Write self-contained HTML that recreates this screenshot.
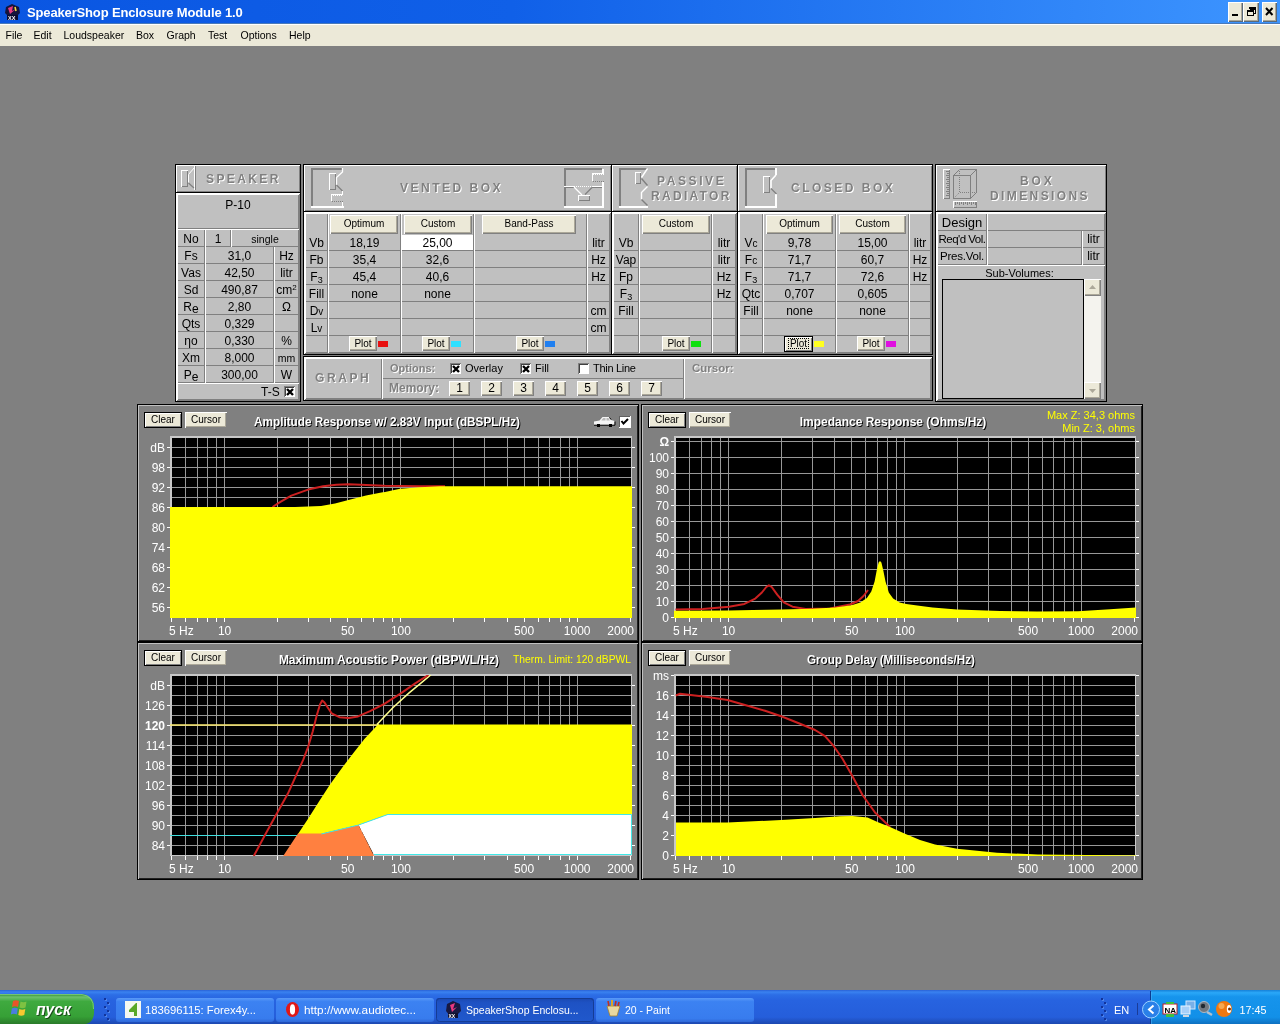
<!DOCTYPE html><html><head><meta charset="utf-8"><title>SpeakerShop Enclosure Module 1.0</title><style>
*{box-sizing:border-box;margin:0;padding:0}
html,body{width:1280px;height:1024px;overflow:hidden;background:#808080;font-family:"Liberation Sans",sans-serif;font-size:13px;color:#000}
.a{position:absolute}
#title{left:0;top:0;width:1280px;height:24px;background:linear-gradient(90deg,#0a56e2 0%,#1060e8 40%,#3d95ff 100%);border-bottom:1px solid #4a7ab8}
#title .t{left:27px;top:5px;color:#fff;font-weight:bold;font-size:13px;letter-spacing:-0.15px;white-space:nowrap}
#menu{left:0;top:24px;width:1280px;height:22px;background:#ece9d8;font-size:10.500px;border-top:1px solid #fff}
#menu span{position:absolute;top:4px;white-space:nowrap}
.pn{position:absolute;background:#c0c0c0;border:1px solid #000;box-shadow:inset 1px 1px 0 #fff,inset -1px -1px 0 #808080}
.c{position:absolute;background:#c0c0c0;box-shadow:inset 1px 1px 0 #fff,inset -1px -1px 0 #808080;text-align:center;white-space:nowrap;font-size:13px;line-height:17px;overflow:hidden}
.btn{position:absolute;background:#ece9d8;box-shadow:inset 1px 1px 0 #fff,inset -1px -1px 0 #808080,inset -2px -2px 0 #aca899;text-align:center;white-space:nowrap;font-size:11px}
.cb{position:absolute;width:11px;height:11px;background:#fff;box-shadow:inset 1px 1px 0 #808080,inset -1px -1px 0 #fff,inset 2px 2px 0 #404040}
.sw{position:absolute;width:10px;height:6px}
.lb{position:absolute;white-space:nowrap;font-size:12px;line-height:14px}
.hd{position:absolute;color:#808080;font-weight:bold;font-size:12px;letter-spacing:2.5px;text-shadow:1px 1px 0 #fff;white-space:nowrap;text-align:left}
.c2{position:absolute;background:#c0c0c0;box-shadow:inset 1px 0 0 #fff,inset -1px 0 0 #808080,inset 0 -1px 0 #808080;text-align:center;white-space:nowrap;font-size:12px;overflow:hidden}
.gp{position:absolute;background:#808080;border:1px solid #000;box-shadow:inset 1px 1px 0 #c0c0c0,inset -1px -1px 0 #202020}
.gt{position:absolute;color:#fff;font-weight:bold;font-size:12px;white-space:nowrap;text-shadow:1px 1px 0 #000;text-align:center}
</style></head><body><div id="root" style="position:absolute;left:0;top:0;width:1280px;height:1024px;will-change:transform">
<div id="title" class="a"><div class="a t">SpeakerShop Enclosure Module 1.0</div></div>
<div id="menu" class="a">
<span style="left:5.5px">File</span>
<span style="left:33.5px">Edit</span>
<span style="left:63.5px">Loudspeaker</span>
<span style="left:136px">Box</span>
<span style="left:166.5px">Graph</span>
<span style="left:208px">Test</span>
<span style="left:240.5px">Options</span>
<span style="left:289px">Help</span>
</div>
<div class="pn" style="left:175px;top:164px;width:126px;height:29px;"></div>
<div class="pn" style="left:175px;top:192px;width:126px;height:210px;"></div>
<div class="pn" style="left:303px;top:164px;width:309px;height:48px;"></div>
<div class="pn" style="left:303px;top:211px;width:309px;height:144px;"></div>
<div class="pn" style="left:611px;top:164px;width:127px;height:48px;"></div>
<div class="pn" style="left:611px;top:211px;width:127px;height:144px;"></div>
<div class="pn" style="left:737px;top:164px;width:196px;height:48px;"></div>
<div class="pn" style="left:737px;top:211px;width:196px;height:144px;"></div>
<div class="pn" style="left:303px;top:356px;width:630px;height:45px;"></div>
<div class="pn" style="left:935px;top:164px;width:172px;height:48px;"></div>
<div class="pn" style="left:935px;top:211px;width:172px;height:191px;"></div>
<div class="hd" style="left:206px;top:172px;letter-spacing:2.4px;font-size:12px">SPEAKER</div>
<div class="hd" style="left:400px;top:181px;letter-spacing:2.5px;font-size:12px">VENTED BOX</div>
<div class="hd" style="left:657px;top:174px;letter-spacing:2.6px;font-size:12px">PASSIVE</div>
<div class="hd" style="left:651px;top:189px;letter-spacing:2.3px;font-size:12px">RADIATOR</div>
<div class="hd" style="left:791px;top:181px;letter-spacing:2.5px;font-size:12px">CLOSED BOX</div>
<div class="hd" style="left:1020px;top:174px;letter-spacing:2.9px;font-size:12px">BOX</div>
<div class="hd" style="left:990px;top:189px;letter-spacing:2.4px;font-size:12px">DIMENSIONS</div>
<svg class="a" style="left:175px;top:164px" width="30" height="28" shape-rendering="crispEdges"><path d="M6.5 23 V6.5 H13" stroke="#fff" stroke-width="1" fill="none" /><path d="M12.5 7 V22.5 H7" stroke="#808080" stroke-width="1" fill="none" /><path d="M13.5 18.5 V10.5 L19.5 3.5" stroke="#fff" stroke-width="1" fill="none" shape-rendering="geometricPrecision"/><path d="M19.5 2 L19.5 26" stroke="#fff" stroke-width="1" fill="none" /><path d="M20.5 2 L20.5 26" stroke="#808080" stroke-width="1" fill="none" /><path d="M13.5 19 L19 24" stroke="#808080" stroke-width="1.2" fill="none" shape-rendering="geometricPrecision"/></svg>
<svg class="a" style="left:304px;top:164px" width="44" height="46" shape-rendering="crispEdges"><path d="M8 42 V5 H38" stroke="#808080" stroke-width="2" fill="none" /><path d="M7 43 H40" stroke="#fff" stroke-width="2" fill="none" /><path d="M25.5 26 V9.5 H32" stroke="#fff" stroke-width="1" fill="none" /><path d="M31.5 10 V25.5 H26" stroke="#808080" stroke-width="1" fill="none" /><path d="M38.5 4 V8 L32.5 13.5 V21" stroke="#fff" stroke-width="1.3" fill="none" shape-rendering="geometricPrecision"/><path d="M32.5 21 L38.5 27" stroke="#808080" stroke-width="1.3" fill="none" shape-rendering="geometricPrecision"/><path d="M38.5 27 L38.5 31" stroke="#fff" stroke-width="1" fill="none" /><path d="M27.5 37 V30.5 H39" stroke="#fff" stroke-width="1" fill="none" /><path d="M27 31.5 L39 31.5" stroke="#fff" stroke-width="1" fill="none" stroke-dasharray="1 1"/><path d="M28 37.5 L39 37.5" stroke="#808080" stroke-width="1" fill="none" stroke-dasharray="1 1"/><path d="M38.5 38 L38.5 44" stroke="#fff" stroke-width="1" fill="none" /></svg>
<svg class="a" style="left:556px;top:164px" width="50" height="46" shape-rendering="crispEdges"><path d="M9 42 V5 H46" stroke="#808080" stroke-width="2" fill="none" /><path d="M8 43 H48" stroke="#fff" stroke-width="2" fill="none" /><path d="M47 5 V9" stroke="#fff" stroke-width="2" fill="none" /><path d="M47 18 V44" stroke="#fff" stroke-width="2" fill="none" /><path d="M8 22.5 L18 22.5" stroke="#fff" stroke-width="1" fill="none" /><path d="M10 23.5 L18 23.5" stroke="#808080" stroke-width="1" fill="none" /><path d="M18 22.5 L36 22.5" stroke="#fff" stroke-width="1" fill="none" stroke-dasharray="1 1"/><path d="M36 22.5 L46 22.5" stroke="#fff" stroke-width="1" fill="none" /><path d="M36 23.5 L46 23.5" stroke="#808080" stroke-width="1" fill="none" /><path d="M18 23 L26 31" stroke="#fff" stroke-width="1.3" fill="none" shape-rendering="geometricPrecision"/><path d="M36 23.5 L29 30.5" stroke="#808080" stroke-width="1.3" fill="none" shape-rendering="geometricPrecision"/><path d="M22.5 37 V31.5 H34" stroke="#fff" stroke-width="1" fill="none" /><path d="M33.5 32 V36.5 H23" stroke="#808080" stroke-width="1" fill="none" /><path d="M36.5 17 V9.5 H48" stroke="#fff" stroke-width="1" fill="none" /><path d="M37 10.5 L48 10.5" stroke="#fff" stroke-width="1" fill="none" stroke-dasharray="1 1"/><path d="M37 17.5 L48 17.5" stroke="#808080" stroke-width="1" fill="none" stroke-dasharray="1 1"/></svg>
<svg class="a" style="left:610px;top:164px" width="42" height="46" shape-rendering="crispEdges"><path d="M10 42 V5 H37" stroke="#808080" stroke-width="2" fill="none" /><path d="M9 43 H38" stroke="#fff" stroke-width="2" fill="none" /><path d="M25.5 20 V8.5 H31" stroke="#fff" stroke-width="1" fill="none" /><path d="M30.5 9 V19.5 H26" stroke="#808080" stroke-width="1" fill="none" /><path d="M37.5 4.5 L31.5 13.5" stroke="#fff" stroke-width="1.4" fill="none" shape-rendering="geometricPrecision"/><path d="M31.5 14.5 L37.5 21.5" stroke="#808080" stroke-width="1.4" fill="none" shape-rendering="geometricPrecision"/><path d="M37.5 22.5 L31.5 28.5 V35.5" stroke="#fff" stroke-width="1.4" fill="none" shape-rendering="geometricPrecision"/><path d="M31.5 35.5 L37.5 41.5" stroke="#808080" stroke-width="1.4" fill="none" shape-rendering="geometricPrecision"/></svg>
<svg class="a" style="left:736px;top:164px" width="44" height="46" shape-rendering="crispEdges"><path d="M10 42 V5 H40" stroke="#808080" stroke-width="2" fill="none" /><path d="M9 43 H41" stroke="#fff" stroke-width="2" fill="none" /><path d="M40 4 V11" stroke="#fff" stroke-width="2" fill="none" /><path d="M40 30 V44" stroke="#fff" stroke-width="2" fill="none" /><path d="M27.5 29 V12.5 H34" stroke="#fff" stroke-width="1" fill="none" /><path d="M33.5 13 V28.5 H28" stroke="#808080" stroke-width="1" fill="none" /><path d="M40 11 L35 16.5 V24.5" stroke="#fff" stroke-width="1.6" fill="none" shape-rendering="geometricPrecision"/><path d="M35 24.5 L40.5 30" stroke="#808080" stroke-width="1.3" fill="none" shape-rendering="geometricPrecision"/></svg>
<svg class="a" style="left:934px;top:164px" width="50" height="46" shape-rendering="crispEdges"><path d="M9.5 35 V5.5 H16" stroke="#fff" stroke-width="1" fill="none" /><path d="M15.5 6 V34.5 H10" stroke="#808080" stroke-width="1" fill="none" /><path d="M12 7.5 L15 7.5" stroke="#808080" stroke-width="1" fill="none" /><path d="M13 9.5 L15 9.5" stroke="#808080" stroke-width="1" fill="none" /><path d="M12 11.5 L15 11.5" stroke="#808080" stroke-width="1" fill="none" /><path d="M13 13.5 L15 13.5" stroke="#808080" stroke-width="1" fill="none" /><path d="M12 15.5 L15 15.5" stroke="#808080" stroke-width="1" fill="none" /><path d="M13 17.5 L15 17.5" stroke="#808080" stroke-width="1" fill="none" /><path d="M12 19.5 L15 19.5" stroke="#808080" stroke-width="1" fill="none" /><path d="M13 21.5 L15 21.5" stroke="#808080" stroke-width="1" fill="none" /><path d="M12 23.5 L15 23.5" stroke="#808080" stroke-width="1" fill="none" /><path d="M13 25.5 L15 25.5" stroke="#808080" stroke-width="1" fill="none" /><path d="M12 27.5 L15 27.5" stroke="#808080" stroke-width="1" fill="none" /><path d="M13 29.5 L15 29.5" stroke="#808080" stroke-width="1" fill="none" /><path d="M12 31.5 L15 31.5" stroke="#808080" stroke-width="1" fill="none" /><path d="M19.5 44 V37.5 H43" stroke="#fff" stroke-width="1" fill="none" /><path d="M42.5 38 V43.5 H20" stroke="#808080" stroke-width="1" fill="none" /><path d="M21.5 38 L21.5 41" stroke="#808080" stroke-width="1" fill="none" /><path d="M23.5 38 L23.5 40" stroke="#808080" stroke-width="1" fill="none" /><path d="M25.5 38 L25.5 41" stroke="#808080" stroke-width="1" fill="none" /><path d="M27.5 38 L27.5 40" stroke="#808080" stroke-width="1" fill="none" /><path d="M29.5 38 L29.5 41" stroke="#808080" stroke-width="1" fill="none" /><path d="M31.5 38 L31.5 40" stroke="#808080" stroke-width="1" fill="none" /><path d="M33.5 38 L33.5 41" stroke="#808080" stroke-width="1" fill="none" /><path d="M35.5 38 L35.5 40" stroke="#808080" stroke-width="1" fill="none" /><path d="M37.5 38 L37.5 41" stroke="#808080" stroke-width="1" fill="none" /><path d="M39.5 38 L39.5 40" stroke="#808080" stroke-width="1" fill="none" /><path d="M41.5 38 L41.5 41" stroke="#808080" stroke-width="1" fill="none" /><path d="M19.5 11.5 H36.5 V34.5 H19.5 Z" stroke="#808080" stroke-width="1" fill="none" /><path d="M25.5 5.5 H42.5 V28.5" stroke="#808080" stroke-width="1" fill="none" /><path d="M19.5 11.5 L25.5 5.5 M36.5 11.5 L42.5 5.5 M36.5 34.5 L42.5 28.5" stroke="#808080" stroke-width="1" fill="none" shape-rendering="geometricPrecision"/><path d="M25.5 7 L25.5 28" stroke="#808080" stroke-width="1" fill="none" stroke-dasharray="1 1"/><path d="M26 28.5 L42 28.5" stroke="#808080" stroke-width="1" fill="none" stroke-dasharray="1 1"/><path d="M25 29 L20 34" stroke="#808080" stroke-width="1" fill="none" shape-rendering="geometricPrecision" stroke-dasharray="1 1.4"/></svg>
<div class="c" style="left:177px;top:194px;width:122px;height:35px;font-size:12px;line-height:23px;">P-10</div>
<div class="a" style="left:177px;top:229px;width:122px;height:1px;background:#fff"></div>
<div class="c2" style="left:177px;top:230px;width:28px;height:17px;font-size:12px;line-height:19px;">No</div>
<div class="c2" style="left:205px;top:230px;width:26px;height:17px;font-size:12px;line-height:19px;">1</div>
<div class="c2" style="left:231px;top:230px;width:68px;height:17px;font-size:10.5px;line-height:19px;">single</div>
<div class="c2" style="left:177px;top:247px;width:28px;height:17px;font-size:12px;line-height:19px;">Fs</div>
<div class="c2" style="left:205px;top:247px;width:69px;height:17px;font-size:12px;line-height:19px;">31,0</div>
<div class="c2" style="left:274px;top:247px;width:25px;height:17px;font-size:12px;line-height:19px;">Hz</div>
<div class="c2" style="left:177px;top:264px;width:28px;height:17px;font-size:12px;line-height:19px;">Vas</div>
<div class="c2" style="left:205px;top:264px;width:69px;height:17px;font-size:12px;line-height:19px;">42,50</div>
<div class="c2" style="left:274px;top:264px;width:25px;height:17px;font-size:12px;line-height:19px;">litr</div>
<div class="c2" style="left:177px;top:281px;width:28px;height:17px;font-size:12px;line-height:19px;">Sd</div>
<div class="c2" style="left:205px;top:281px;width:69px;height:17px;font-size:12px;line-height:19px;">490,87</div>
<div class="c2" style="left:274px;top:281px;width:25px;height:17px;font-size:12px;line-height:19px;">cm<sup style="font-size:8px;line-height:0;vertical-align:4px">2</sup></div>
<div class="c2" style="left:177px;top:298px;width:28px;height:17px;font-size:12px;line-height:19px;">R<span style="position:relative;top:2px">e</span></div>
<div class="c2" style="left:205px;top:298px;width:69px;height:17px;font-size:12px;line-height:19px;">2,80</div>
<div class="c2" style="left:274px;top:298px;width:25px;height:17px;font-size:12px;line-height:19px;">&Omega;</div>
<div class="c2" style="left:177px;top:315px;width:28px;height:17px;font-size:12px;line-height:19px;">Qts</div>
<div class="c2" style="left:205px;top:315px;width:69px;height:17px;font-size:12px;line-height:19px;">0,329</div>
<div class="c2" style="left:274px;top:315px;width:25px;height:17px;font-size:12px;line-height:19px;"></div>
<div class="c2" style="left:177px;top:332px;width:28px;height:17px;font-size:12px;line-height:19px;">&eta;o</div>
<div class="c2" style="left:205px;top:332px;width:69px;height:17px;font-size:12px;line-height:19px;">0,330</div>
<div class="c2" style="left:274px;top:332px;width:25px;height:17px;font-size:12px;line-height:19px;">%</div>
<div class="c2" style="left:177px;top:349px;width:28px;height:17px;font-size:12px;line-height:19px;">Xm</div>
<div class="c2" style="left:205px;top:349px;width:69px;height:17px;font-size:12px;line-height:19px;">8,000</div>
<div class="c2" style="left:274px;top:349px;width:25px;height:17px;font-size:10.5px;line-height:19px;">mm</div>
<div class="c2" style="left:177px;top:366px;width:28px;height:17px;font-size:12px;line-height:19px;">P<span style="position:relative;top:2px">e</span></div>
<div class="c2" style="left:205px;top:366px;width:69px;height:17px;font-size:12px;line-height:19px;">300,00</div>
<div class="c2" style="left:274px;top:366px;width:25px;height:17px;font-size:12px;line-height:19px;">W</div>
<div class="c" style="left:177px;top:383px;width:122px;height:17px;font-size:12px;line-height:17px;"></div>
<div class="lb" style="left:261px;top:385px;font-size:12px;">T-S</div>
<div class="cb" style="left:284px;top:386px"><svg width="11" height="11" style="position:absolute;left:0;top:0"><path d="M3 3 L9 9 M9 3 L3 9" stroke="#000" stroke-width="2.4" fill="none"/></svg></div>
<div class="c" style="left:305px;top:213px;width:23px;height:140px;font-size:12px;line-height:140px;"></div>
<div class="a" style="left:306px;top:250px;width:21px;height:1px;background:#808080"></div>
<div class="a" style="left:306px;top:267px;width:21px;height:1px;background:#808080"></div>
<div class="a" style="left:306px;top:284px;width:21px;height:1px;background:#808080"></div>
<div class="a" style="left:306px;top:301px;width:21px;height:1px;background:#808080"></div>
<div class="a" style="left:306px;top:318px;width:21px;height:1px;background:#808080"></div>
<div class="a" style="left:306px;top:335px;width:21px;height:1px;background:#808080"></div>
<div class="lb" style="left:305px;width:23px;text-align:center;top:236px;font-size:12px">Vb</div>
<div class="lb" style="left:305px;width:23px;text-align:center;top:253px;font-size:12px">Fb</div>
<div class="lb" style="left:305px;width:23px;text-align:center;top:270px;font-size:12px">F<span style="font-size:9px;position:relative;top:2px">3</span></div>
<div class="lb" style="left:305px;width:23px;text-align:center;top:287px;font-size:12px">Fill</div>
<div class="lb" style="left:305px;width:23px;text-align:center;top:304px;font-size:12px">D<span style="font-size:10px">v</span></div>
<div class="lb" style="left:305px;width:23px;text-align:center;top:321px;font-size:12px">L<span style="font-size:10px">v</span></div>
<div class="c" style="left:328px;top:213px;width:73px;height:140px;font-size:12px;line-height:140px;"></div>
<div class="a" style="left:329px;top:250px;width:71px;height:1px;background:#808080"></div>
<div class="a" style="left:329px;top:267px;width:71px;height:1px;background:#808080"></div>
<div class="a" style="left:329px;top:284px;width:71px;height:1px;background:#808080"></div>
<div class="a" style="left:329px;top:301px;width:71px;height:1px;background:#808080"></div>
<div class="a" style="left:329px;top:318px;width:71px;height:1px;background:#808080"></div>
<div class="a" style="left:329px;top:335px;width:71px;height:1px;background:#808080"></div>
<div class="lb" style="left:328px;width:73px;text-align:center;top:236px;font-size:12px">18,19</div>
<div class="lb" style="left:328px;width:73px;text-align:center;top:253px;font-size:12px">35,4</div>
<div class="lb" style="left:328px;width:73px;text-align:center;top:270px;font-size:12px">45,4</div>
<div class="lb" style="left:328px;width:73px;text-align:center;top:287px;font-size:12px">none</div>
<div class="c" style="left:401px;top:213px;width:73px;height:140px;font-size:12px;line-height:140px;"></div>
<div class="a" style="left:402px;top:250px;width:71px;height:1px;background:#808080"></div>
<div class="a" style="left:402px;top:267px;width:71px;height:1px;background:#808080"></div>
<div class="a" style="left:402px;top:284px;width:71px;height:1px;background:#808080"></div>
<div class="a" style="left:402px;top:301px;width:71px;height:1px;background:#808080"></div>
<div class="a" style="left:402px;top:318px;width:71px;height:1px;background:#808080"></div>
<div class="a" style="left:402px;top:335px;width:71px;height:1px;background:#808080"></div>
<div class="lb" style="left:401px;width:73px;text-align:center;top:253px;font-size:12px">32,6</div>
<div class="lb" style="left:401px;width:73px;text-align:center;top:270px;font-size:12px">40,6</div>
<div class="lb" style="left:401px;width:73px;text-align:center;top:287px;font-size:12px">none</div>
<div class="a" style="left:402px;top:235px;width:71px;height:15px;background:#fff;text-align:center;font-size:12px;line-height:16px">25,00</div>
<div class="c" style="left:474px;top:213px;width:113px;height:140px;font-size:12px;line-height:140px;"></div>
<div class="a" style="left:475px;top:250px;width:111px;height:1px;background:#808080"></div>
<div class="a" style="left:475px;top:267px;width:111px;height:1px;background:#808080"></div>
<div class="a" style="left:475px;top:284px;width:111px;height:1px;background:#808080"></div>
<div class="a" style="left:475px;top:301px;width:111px;height:1px;background:#808080"></div>
<div class="a" style="left:475px;top:318px;width:111px;height:1px;background:#808080"></div>
<div class="a" style="left:475px;top:335px;width:111px;height:1px;background:#808080"></div>
<div class="c" style="left:587px;top:213px;width:23px;height:140px;font-size:12px;line-height:140px;"></div>
<div class="a" style="left:588px;top:250px;width:21px;height:1px;background:#808080"></div>
<div class="a" style="left:588px;top:267px;width:21px;height:1px;background:#808080"></div>
<div class="a" style="left:588px;top:284px;width:21px;height:1px;background:#808080"></div>
<div class="a" style="left:588px;top:301px;width:21px;height:1px;background:#808080"></div>
<div class="a" style="left:588px;top:318px;width:21px;height:1px;background:#808080"></div>
<div class="a" style="left:588px;top:335px;width:21px;height:1px;background:#808080"></div>
<div class="lb" style="left:587px;width:23px;text-align:center;top:236px;font-size:12px">litr</div>
<div class="lb" style="left:587px;width:23px;text-align:center;top:253px;font-size:12px">Hz</div>
<div class="lb" style="left:587px;width:23px;text-align:center;top:270px;font-size:12px">Hz</div>
<div class="lb" style="left:587px;width:23px;text-align:center;top:304px;font-size:12px">cm</div>
<div class="lb" style="left:587px;width:23px;text-align:center;top:321px;font-size:12px">cm</div>
<div class="btn" style="left:330px;top:215px;width:68px;height:19px;line-height:18px;font-size:10px;">Optimum</div>
<div class="btn" style="left:404px;top:215px;width:68px;height:19px;line-height:18px;font-size:10px;">Custom</div>
<div class="btn" style="left:482px;top:215px;width:94px;height:19px;line-height:18px;font-size:10px;">Band-Pass</div>
<div class="btn" style="left:349px;top:336px;width:28px;height:15px;line-height:14px;font-size:10px;line-height:15px;">Plot</div>
<div class="sw" style="left:378px;top:341px;background:#e81010"></div>
<div class="btn" style="left:422px;top:336px;width:28px;height:15px;line-height:14px;font-size:10px;line-height:15px;">Plot</div>
<div class="sw" style="left:451px;top:341px;background:#30e0ff"></div>
<div class="btn" style="left:516px;top:336px;width:28px;height:15px;line-height:14px;font-size:10px;line-height:15px;">Plot</div>
<div class="sw" style="left:545px;top:341px;background:#2080f0"></div>
<div class="c" style="left:613px;top:213px;width:26px;height:140px;font-size:12px;line-height:140px;"></div>
<div class="a" style="left:614px;top:250px;width:24px;height:1px;background:#808080"></div>
<div class="a" style="left:614px;top:267px;width:24px;height:1px;background:#808080"></div>
<div class="a" style="left:614px;top:284px;width:24px;height:1px;background:#808080"></div>
<div class="a" style="left:614px;top:301px;width:24px;height:1px;background:#808080"></div>
<div class="a" style="left:614px;top:318px;width:24px;height:1px;background:#808080"></div>
<div class="a" style="left:614px;top:335px;width:24px;height:1px;background:#808080"></div>
<div class="lb" style="left:613px;width:26px;text-align:center;top:236px;font-size:12px">Vb</div>
<div class="lb" style="left:613px;width:26px;text-align:center;top:253px;font-size:12px">Vap</div>
<div class="lb" style="left:613px;width:26px;text-align:center;top:270px;font-size:12px">Fp</div>
<div class="lb" style="left:613px;width:26px;text-align:center;top:287px;font-size:12px">F<span style="font-size:9px;position:relative;top:2px">3</span></div>
<div class="lb" style="left:613px;width:26px;text-align:center;top:304px;font-size:12px">Fill</div>
<div class="c" style="left:639px;top:213px;width:73px;height:140px;font-size:12px;line-height:140px;"></div>
<div class="a" style="left:640px;top:250px;width:71px;height:1px;background:#808080"></div>
<div class="a" style="left:640px;top:267px;width:71px;height:1px;background:#808080"></div>
<div class="a" style="left:640px;top:284px;width:71px;height:1px;background:#808080"></div>
<div class="a" style="left:640px;top:301px;width:71px;height:1px;background:#808080"></div>
<div class="a" style="left:640px;top:318px;width:71px;height:1px;background:#808080"></div>
<div class="a" style="left:640px;top:335px;width:71px;height:1px;background:#808080"></div>
<div class="c" style="left:712px;top:213px;width:24px;height:140px;font-size:12px;line-height:140px;"></div>
<div class="a" style="left:713px;top:250px;width:22px;height:1px;background:#808080"></div>
<div class="a" style="left:713px;top:267px;width:22px;height:1px;background:#808080"></div>
<div class="a" style="left:713px;top:284px;width:22px;height:1px;background:#808080"></div>
<div class="a" style="left:713px;top:301px;width:22px;height:1px;background:#808080"></div>
<div class="a" style="left:713px;top:318px;width:22px;height:1px;background:#808080"></div>
<div class="a" style="left:713px;top:335px;width:22px;height:1px;background:#808080"></div>
<div class="lb" style="left:712px;width:24px;text-align:center;top:236px;font-size:12px">litr</div>
<div class="lb" style="left:712px;width:24px;text-align:center;top:253px;font-size:12px">litr</div>
<div class="lb" style="left:712px;width:24px;text-align:center;top:270px;font-size:12px">Hz</div>
<div class="lb" style="left:712px;width:24px;text-align:center;top:287px;font-size:12px">Hz</div>
<div class="btn" style="left:642px;top:215px;width:68px;height:19px;line-height:18px;font-size:10px;">Custom</div>
<div class="btn" style="left:662px;top:336px;width:28px;height:15px;line-height:14px;font-size:10px;line-height:15px;">Plot</div>
<div class="sw" style="left:691px;top:341px;background:#10e010"></div>
<div class="c" style="left:739px;top:213px;width:24px;height:140px;font-size:12px;line-height:140px;"></div>
<div class="a" style="left:740px;top:250px;width:22px;height:1px;background:#808080"></div>
<div class="a" style="left:740px;top:267px;width:22px;height:1px;background:#808080"></div>
<div class="a" style="left:740px;top:284px;width:22px;height:1px;background:#808080"></div>
<div class="a" style="left:740px;top:301px;width:22px;height:1px;background:#808080"></div>
<div class="a" style="left:740px;top:318px;width:22px;height:1px;background:#808080"></div>
<div class="a" style="left:740px;top:335px;width:22px;height:1px;background:#808080"></div>
<div class="lb" style="left:739px;width:24px;text-align:center;top:236px;font-size:12px">V<span style="font-size:10px">c</span></div>
<div class="lb" style="left:739px;width:24px;text-align:center;top:253px;font-size:12px">F<span style="font-size:10px">c</span></div>
<div class="lb" style="left:739px;width:24px;text-align:center;top:270px;font-size:12px">F<span style="font-size:9px;position:relative;top:2px">3</span></div>
<div class="lb" style="left:739px;width:24px;text-align:center;top:287px;font-size:12px">Qtc</div>
<div class="lb" style="left:739px;width:24px;text-align:center;top:304px;font-size:12px">Fill</div>
<div class="c" style="left:763px;top:213px;width:73px;height:140px;font-size:12px;line-height:140px;"></div>
<div class="a" style="left:764px;top:250px;width:71px;height:1px;background:#808080"></div>
<div class="a" style="left:764px;top:267px;width:71px;height:1px;background:#808080"></div>
<div class="a" style="left:764px;top:284px;width:71px;height:1px;background:#808080"></div>
<div class="a" style="left:764px;top:301px;width:71px;height:1px;background:#808080"></div>
<div class="a" style="left:764px;top:318px;width:71px;height:1px;background:#808080"></div>
<div class="a" style="left:764px;top:335px;width:71px;height:1px;background:#808080"></div>
<div class="lb" style="left:763px;width:73px;text-align:center;top:236px;font-size:12px">9,78</div>
<div class="lb" style="left:763px;width:73px;text-align:center;top:253px;font-size:12px">71,7</div>
<div class="lb" style="left:763px;width:73px;text-align:center;top:270px;font-size:12px">71,7</div>
<div class="lb" style="left:763px;width:73px;text-align:center;top:287px;font-size:12px">0,707</div>
<div class="lb" style="left:763px;width:73px;text-align:center;top:304px;font-size:12px">none</div>
<div class="c" style="left:836px;top:213px;width:73px;height:140px;font-size:12px;line-height:140px;"></div>
<div class="a" style="left:837px;top:250px;width:71px;height:1px;background:#808080"></div>
<div class="a" style="left:837px;top:267px;width:71px;height:1px;background:#808080"></div>
<div class="a" style="left:837px;top:284px;width:71px;height:1px;background:#808080"></div>
<div class="a" style="left:837px;top:301px;width:71px;height:1px;background:#808080"></div>
<div class="a" style="left:837px;top:318px;width:71px;height:1px;background:#808080"></div>
<div class="a" style="left:837px;top:335px;width:71px;height:1px;background:#808080"></div>
<div class="lb" style="left:836px;width:73px;text-align:center;top:236px;font-size:12px">15,00</div>
<div class="lb" style="left:836px;width:73px;text-align:center;top:253px;font-size:12px">60,7</div>
<div class="lb" style="left:836px;width:73px;text-align:center;top:270px;font-size:12px">72,6</div>
<div class="lb" style="left:836px;width:73px;text-align:center;top:287px;font-size:12px">0,605</div>
<div class="lb" style="left:836px;width:73px;text-align:center;top:304px;font-size:12px">none</div>
<div class="c" style="left:909px;top:213px;width:22px;height:140px;font-size:12px;line-height:140px;"></div>
<div class="a" style="left:910px;top:250px;width:20px;height:1px;background:#808080"></div>
<div class="a" style="left:910px;top:267px;width:20px;height:1px;background:#808080"></div>
<div class="a" style="left:910px;top:284px;width:20px;height:1px;background:#808080"></div>
<div class="a" style="left:910px;top:301px;width:20px;height:1px;background:#808080"></div>
<div class="a" style="left:910px;top:318px;width:20px;height:1px;background:#808080"></div>
<div class="a" style="left:910px;top:335px;width:20px;height:1px;background:#808080"></div>
<div class="lb" style="left:909px;width:22px;text-align:center;top:236px;font-size:12px">litr</div>
<div class="lb" style="left:909px;width:22px;text-align:center;top:253px;font-size:12px">Hz</div>
<div class="lb" style="left:909px;width:22px;text-align:center;top:270px;font-size:12px">Hz</div>
<div class="btn" style="left:766px;top:215px;width:67px;height:19px;line-height:18px;font-size:10px;">Optimum</div>
<div class="btn" style="left:839px;top:215px;width:67px;height:19px;line-height:18px;font-size:10px;">Custom</div>
<div class="btn" style="left:784px;top:336px;width:29px;height:16px;line-height:15px;font-size:10px;line-height:16px;box-shadow:inset 0 0 0 1px #000,inset 2px 2px 0 #fff,inset -2px -2px 0 #808080;"><span style="outline:1px dotted #000;outline-offset:-1px;padding:0 2px">Plot</span></div>
<div class="sw" style="left:814px;top:341px;background:#ffff20"></div>
<div class="btn" style="left:857px;top:336px;width:28px;height:15px;line-height:14px;font-size:10px;line-height:15px;">Plot</div>
<div class="sw" style="left:886px;top:341px;background:#e010e0"></div>
<div class="c" style="left:305px;top:358px;width:77px;height:41px;font-size:12px;line-height:41px;"></div>
<div class="hd" style="left:315px;top:371px;letter-spacing:2.6px;font-size:12px">GRAPH</div>
<div class="c" style="left:382px;top:358px;width:302px;height:41px;font-size:12px;line-height:41px;"></div>
<div class="a" style="left:383px;top:378px;width:300px;height:1px;background:#808080"></div>
<div class="c" style="left:684px;top:358px;width:247px;height:41px;font-size:12px;line-height:41px;"></div>
<div class="lb" style="left:390px;top:361px;font-weight:bold;color:#808080;text-shadow:1px 1px 0 #fff;font-size:11px">Options:</div>
<div class="lb" style="left:389px;top:381px;font-weight:bold;color:#808080;text-shadow:1px 1px 0 #fff;font-size:12px">Memory:</div>
<div class="lb" style="left:692px;top:361px;font-weight:bold;color:#808080;text-shadow:1px 1px 0 #fff;font-size:11.5px">Cursor:</div>
<div class="cb" style="left:450px;top:363px"><svg width="11" height="11" style="position:absolute;left:0;top:0"><path d="M3 3 L9 9 M9 3 L3 9" stroke="#000" stroke-width="2.4" fill="none"/></svg></div>
<div class="lb" style="left:465px;top:361px;font-size:11px;">Overlay</div>
<div class="cb" style="left:520px;top:363px"><svg width="11" height="11" style="position:absolute;left:0;top:0"><path d="M3 3 L9 9 M9 3 L3 9" stroke="#000" stroke-width="2.4" fill="none"/></svg></div>
<div class="lb" style="left:535px;top:361px;font-size:11px;">Fill</div>
<div class="cb" style="left:578px;top:363px"></div>
<div class="lb" style="left:593px;top:361px;font-size:11px;letter-spacing:-0.3px;">Thin Line</div>
<div class="btn" style="left:449px;top:381px;width:21px;height:15px;line-height:14px;font-size:12px;line-height:15px;">1</div>
<div class="btn" style="left:481px;top:381px;width:21px;height:15px;line-height:14px;font-size:12px;line-height:15px;">2</div>
<div class="btn" style="left:513px;top:381px;width:21px;height:15px;line-height:14px;font-size:12px;line-height:15px;">3</div>
<div class="btn" style="left:545px;top:381px;width:21px;height:15px;line-height:14px;font-size:12px;line-height:15px;">4</div>
<div class="btn" style="left:577px;top:381px;width:21px;height:15px;line-height:14px;font-size:12px;line-height:15px;">5</div>
<div class="btn" style="left:609px;top:381px;width:21px;height:15px;line-height:14px;font-size:12px;line-height:15px;">6</div>
<div class="btn" style="left:641px;top:381px;width:21px;height:15px;line-height:14px;font-size:12px;line-height:15px;">7</div>
<div class="a" style="left:937px;top:213px;width:168px;height:1px;background:#fff"></div>
<div class="c2" style="left:937px;top:214px;width:50px;height:17px;font-size:13px;line-height:19px;line-height:17px;">Design</div>
<div class="c2" style="left:987px;top:214px;width:118px;height:17px;font-size:12px;line-height:19px;"></div>
<div class="c2" style="left:937px;top:231px;width:50px;height:17px;font-size:11.5px;line-height:19px;line-height:17px;letter-spacing:-0.5px;">Req'd Vol.</div>
<div class="c2" style="left:987px;top:231px;width:95px;height:17px;font-size:12px;line-height:19px;"></div>
<div class="c2" style="left:1082px;top:231px;width:23px;height:17px;font-size:12px;line-height:19px;line-height:17px;">litr</div>
<div class="c2" style="left:937px;top:248px;width:50px;height:17px;font-size:11.5px;line-height:19px;line-height:17px;letter-spacing:-0.25px;">Pres.Vol.</div>
<div class="c2" style="left:987px;top:248px;width:95px;height:17px;font-size:12px;line-height:19px;"></div>
<div class="c2" style="left:1082px;top:248px;width:23px;height:17px;font-size:12px;line-height:19px;line-height:17px;">litr</div>
<div class="c" style="left:937px;top:265px;width:168px;height:135px;font-size:12px;line-height:135px;"></div>
<div class="lb" style="left:937px;width:165px;text-align:center;top:266px;font-size:11px">Sub-Volumes:</div>
<div class="a" style="left:942px;top:279px;width:142px;height:120px;background:#c0c0c0;border:1px solid #000"></div>
<div class="a" style="left:1084px;top:279px;width:17px;height:120px;background:#f4f3ee"></div>
<div class="btn" style="left:1084px;top:279px;width:17px;height:17px"><svg width="17" height="17"><path d="M5 10 L8.5 6 L12 10 Z" fill="#aca899"/></svg></div>
<div class="btn" style="left:1084px;top:382px;width:17px;height:17px"><svg width="17" height="17"><path d="M5 7 L8.5 11 L12 7 Z" fill="#aca899"/></svg></div>
<div class="gp" style="left:137px;top:404px;width:502px;height:238px"></div>
<div class="gp" style="left:641px;top:404px;width:502px;height:238px"></div>
<div class="gp" style="left:137px;top:642px;width:502px;height:238px"></div>
<div class="gp" style="left:641px;top:642px;width:502px;height:238px"></div>
<svg class="a" style="left:0;top:0" width="1280" height="1024" viewBox="0 0 1280 1024"><g shape-rendering="crispEdges"><rect x="170" y="436" width="462" height="182" fill="#c8c8c8"/><rect x="172" y="438" width="459" height="179" fill="#000"/><path d="M185.5 438 V617 M197.5 438 V617 M207.5 438 V617 M216.5 438 V617 M224.5 438 V617 M277.5 438 V617 M308.5 438 V617 M330.5 438 V617 M347.5 438 V617 M361.5 438 V617 M373.5 438 V617 M383.5 438 V617 M392.5 438 V617 M400.5 438 V617 M453.5 438 V617 M484.5 438 V617 M507.5 438 V617 M524.5 438 V617 M538.5 438 V617 M549.5 438 V617 M560.5 438 V617 M569.5 438 V617 M577.5 438 V617 M172 447.5 H631 M172 457.5 H631 M172 467.5 H631 M172 477.5 H631 M172 487.5 H631 M172 497.5 H631 M172 507.5 H631 M172 517.5 H631 M172 527.5 H631 M172 537.5 H631 M172 547.5 H631 M172 557.5 H631 M172 567.5 H631 M172 577.5 H631 M172 587.5 H631 M172 597.5 H631 M172 607.5 H631 " stroke="#989898" stroke-width="1" fill="none"/></g><clipPath id="cp137_404"><rect x="170" y="437" width="462" height="181"/></clipPath><g clip-path="url(#cp137_404)"><polyline points="272.5,507.0 280.0,502.2 291.3,495.6 308.1,489.6 323.1,486.3 336.3,484.8 349.0,484.2 366.3,485.0 385.0,485.8 400.0,486.0 420.0,486.2 445.0,486.3" fill="none" stroke="#cc2020" stroke-width="2" stroke-linejoin="round"/><polygon points="170.0,507.0 295.0,507.0 321.0,506.0 335.0,503.5 347.5,500.3 366.0,495.6 385.0,491.9 400.0,488.8 420.0,487.2 440.0,486.3 632.0,486.3 632.0,618.0 170.0,618.0" fill="#ffff00"/></g><path d="M171.5 618 V622 M185.5 618 V622 M197.5 618 V622 M207.5 618 V622 M216.5 618 V622 M224.5 618 V622 M277.5 618 V622 M308.5 618 V622 M330.5 618 V622 M347.5 618 V622 M361.5 618 V622 M373.5 618 V622 M383.5 618 V622 M392.5 618 V622 M400.5 618 V622 M453.5 618 V622 M484.5 618 V622 M507.5 618 V622 M524.5 618 V622 M538.5 618 V622 M549.5 618 V622 M560.5 618 V622 M569.5 618 V622 M577.5 618 V622 M630.5 618 V622 M167 447.5 H170 M632 447.5 H635 M167 467.5 H170 M632 467.5 H635 M167 487.5 H170 M632 487.5 H635 M167 507.5 H170 M632 507.5 H635 M167 527.5 H170 M632 527.5 H635 M167 547.5 H170 M632 547.5 H635 M167 567.5 H170 M632 567.5 H635 M167 587.5 H170 M632 587.5 H635 M167 607.5 H170 M632 607.5 H635 " stroke="#fff" stroke-width="1" fill="none" shape-rendering="crispEdges"/><text x="165" y="451.5" text-anchor="end" fill="#fff" font-size="12" font-family="Liberation Sans, sans-serif">dB</text><text x="165" y="471.5" text-anchor="end" fill="#fff" font-size="12" font-family="Liberation Sans, sans-serif">98</text><text x="165" y="491.5" text-anchor="end" fill="#fff" font-size="12" font-family="Liberation Sans, sans-serif">92</text><text x="165" y="511.5" text-anchor="end" fill="#fff" font-size="12" font-family="Liberation Sans, sans-serif">86</text><text x="165" y="531.5" text-anchor="end" fill="#fff" font-size="12" font-family="Liberation Sans, sans-serif">80</text><text x="165" y="551.5" text-anchor="end" fill="#fff" font-size="12" font-family="Liberation Sans, sans-serif">74</text><text x="165" y="571.5" text-anchor="end" fill="#fff" font-size="12" font-family="Liberation Sans, sans-serif">68</text><text x="165" y="591.5" text-anchor="end" fill="#fff" font-size="12" font-family="Liberation Sans, sans-serif">62</text><text x="165" y="611.5" text-anchor="end" fill="#fff" font-size="12" font-family="Liberation Sans, sans-serif">56</text><text x="169" y="635" fill="#fff" font-size="12" font-family="Liberation Sans, sans-serif">5 Hz</text><text x="224.6" y="635" text-anchor="middle" fill="#fff" font-size="12" font-family="Liberation Sans, sans-serif">10</text><text x="347.8" y="635" text-anchor="middle" fill="#fff" font-size="12" font-family="Liberation Sans, sans-serif">50</text><text x="400.9" y="635" text-anchor="middle" fill="#fff" font-size="12" font-family="Liberation Sans, sans-serif">100</text><text x="524.1" y="635" text-anchor="middle" fill="#fff" font-size="12" font-family="Liberation Sans, sans-serif">500</text><text x="577.2" y="635" text-anchor="middle" fill="#fff" font-size="12" font-family="Liberation Sans, sans-serif">1000</text><text x="634" y="635" text-anchor="end" fill="#fff" font-size="12" font-family="Liberation Sans, sans-serif">2000</text><text x="388" y="427" text-anchor="middle" fill="#000" font-size="12" font-weight="bold" font-family="Liberation Sans, sans-serif" textLength="266" lengthAdjust="spacingAndGlyphs">Amplitude Response w/ 2.83V Input (dBSPL/Hz)</text><text x="387" y="426" text-anchor="middle" fill="#fff" font-size="12" font-weight="bold" font-family="Liberation Sans, sans-serif" textLength="266" lengthAdjust="spacingAndGlyphs">Amplitude Response w/ 2.83V Input (dBSPL/Hz)</text></svg>
<div class="btn" style="left:144px;top:412px;width:38px;height:16px;line-height:15px;font-size:10px;box-shadow:inset 0 0 0 1px #000,inset 2px 2px 0 #fff,inset -2px -2px 0 #808080">Clear</div>
<div class="btn" style="left:185px;top:412px;width:42px;height:16px;line-height:15px;font-size:10px">Cursor</div>
<svg class="a" style="left:0;top:0" width="1280" height="1024" viewBox="0 0 1280 1024"><g shape-rendering="crispEdges"><rect x="674" y="436" width="462" height="182" fill="#c8c8c8"/><rect x="676" y="438" width="459" height="179" fill="#000"/><path d="M689.5 438 V617 M701.5 438 V617 M711.5 438 V617 M720.5 438 V617 M728.5 438 V617 M781.5 438 V617 M812.5 438 V617 M834.5 438 V617 M851.5 438 V617 M865.5 438 V617 M877.5 438 V617 M887.5 438 V617 M896.5 438 V617 M904.5 438 V617 M957.5 438 V617 M988.5 438 V617 M1011.5 438 V617 M1028.5 438 V617 M1042.5 438 V617 M1053.5 438 V617 M1064.5 438 V617 M1073.5 438 V617 M1081.5 438 V617 M676 441.5 H1135 M676 457.5 H1135 M676 473.5 H1135 M676 489.5 H1135 M676 505.5 H1135 M676 521.5 H1135 M676 537.5 H1135 M676 553.5 H1135 M676 569.5 H1135 M676 585.5 H1135 M676 601.5 H1135 " stroke="#989898" stroke-width="1" fill="none"/></g><clipPath id="cp641_404"><rect x="674" y="437" width="462" height="181"/></clipPath><g clip-path="url(#cp641_404)"><polyline points="675.5,609.6 702.8,609.1 729.0,606.7 744.4,603.9 755.3,598.6 761.9,592.5 766.3,587.0 768.9,585.3 771.7,587.0 777.2,594.7 783.8,602.4 792.5,606.7 805.6,609.1 830.0,608.5 850.0,604.5 858.0,601.0 863.5,596.0 868.0,590.0" fill="none" stroke="#cc2020" stroke-width="2" stroke-linejoin="round"/><polygon points="674.0,610.8 729.0,610.6 753.0,610.1 781.6,609.6 812.2,608.7 835.2,607.4 851.6,605.2 860.3,602.4 866.9,598.0 871.3,591.4 874.6,581.6 876.7,570.6 878.6,562.5 880.0,561.0 881.4,562.5 883.3,570.6 885.5,581.6 888.8,592.5 893.1,598.6 899.7,602.4 906.3,604.1 917.2,605.6 932.5,607.4 957.0,609.6 1000.0,611.0 1037.0,611.6 1078.0,611.2 1110.0,609.2 1136.0,607.4 1136.0,618.0 674.0,618.0" fill="#ffff00"/></g><path d="M675.5 618 V622 M689.5 618 V622 M701.5 618 V622 M711.5 618 V622 M720.5 618 V622 M728.5 618 V622 M781.5 618 V622 M812.5 618 V622 M834.5 618 V622 M851.5 618 V622 M865.5 618 V622 M877.5 618 V622 M887.5 618 V622 M896.5 618 V622 M904.5 618 V622 M957.5 618 V622 M988.5 618 V622 M1011.5 618 V622 M1028.5 618 V622 M1042.5 618 V622 M1053.5 618 V622 M1064.5 618 V622 M1073.5 618 V622 M1081.5 618 V622 M1134.5 618 V622 M671 441.5 H674 M1136 441.5 H1139 M671 457.5 H674 M1136 457.5 H1139 M671 473.5 H674 M1136 473.5 H1139 M671 489.5 H674 M1136 489.5 H1139 M671 505.5 H674 M1136 505.5 H1139 M671 521.5 H674 M1136 521.5 H1139 M671 537.5 H674 M1136 537.5 H1139 M671 553.5 H674 M1136 553.5 H1139 M671 569.5 H674 M1136 569.5 H1139 M671 585.5 H674 M1136 585.5 H1139 M671 601.5 H674 M1136 601.5 H1139 M671 617.5 H674 M1136 617.5 H1139 " stroke="#fff" stroke-width="1" fill="none" shape-rendering="crispEdges"/><text x="669" y="445.5" text-anchor="end" fill="#fff" font-size="12" font-family="Liberation Sans, sans-serif" font-weight="bold">&#937;</text><text x="669" y="461.5" text-anchor="end" fill="#fff" font-size="12" font-family="Liberation Sans, sans-serif">100</text><text x="669" y="477.5" text-anchor="end" fill="#fff" font-size="12" font-family="Liberation Sans, sans-serif">90</text><text x="669" y="493.5" text-anchor="end" fill="#fff" font-size="12" font-family="Liberation Sans, sans-serif">80</text><text x="669" y="509.5" text-anchor="end" fill="#fff" font-size="12" font-family="Liberation Sans, sans-serif">70</text><text x="669" y="525.5" text-anchor="end" fill="#fff" font-size="12" font-family="Liberation Sans, sans-serif">60</text><text x="669" y="541.5" text-anchor="end" fill="#fff" font-size="12" font-family="Liberation Sans, sans-serif">50</text><text x="669" y="557.5" text-anchor="end" fill="#fff" font-size="12" font-family="Liberation Sans, sans-serif">40</text><text x="669" y="573.5" text-anchor="end" fill="#fff" font-size="12" font-family="Liberation Sans, sans-serif">30</text><text x="669" y="589.5" text-anchor="end" fill="#fff" font-size="12" font-family="Liberation Sans, sans-serif">20</text><text x="669" y="605.5" text-anchor="end" fill="#fff" font-size="12" font-family="Liberation Sans, sans-serif">10</text><text x="669" y="621.5" text-anchor="end" fill="#fff" font-size="12" font-family="Liberation Sans, sans-serif">0</text><text x="673" y="635" fill="#fff" font-size="12" font-family="Liberation Sans, sans-serif">5 Hz</text><text x="728.6" y="635" text-anchor="middle" fill="#fff" font-size="12" font-family="Liberation Sans, sans-serif">10</text><text x="851.8" y="635" text-anchor="middle" fill="#fff" font-size="12" font-family="Liberation Sans, sans-serif">50</text><text x="904.9" y="635" text-anchor="middle" fill="#fff" font-size="12" font-family="Liberation Sans, sans-serif">100</text><text x="1028.1" y="635" text-anchor="middle" fill="#fff" font-size="12" font-family="Liberation Sans, sans-serif">500</text><text x="1081.2" y="635" text-anchor="middle" fill="#fff" font-size="12" font-family="Liberation Sans, sans-serif">1000</text><text x="1138" y="635" text-anchor="end" fill="#fff" font-size="12" font-family="Liberation Sans, sans-serif">2000</text><text x="894" y="427" text-anchor="middle" fill="#000" font-size="12" font-weight="bold" font-family="Liberation Sans, sans-serif">Impedance Response (Ohms/Hz)</text><text x="893" y="426" text-anchor="middle" fill="#fff" font-size="12" font-weight="bold" font-family="Liberation Sans, sans-serif">Impedance Response (Ohms/Hz)</text><text x="1135" y="419" text-anchor="end" fill="#ffff00" font-size="11" font-family="Liberation Sans, sans-serif">Max Z: 34,3 ohms</text><text x="1135" y="432" text-anchor="end" fill="#ffff00" font-size="11" font-family="Liberation Sans, sans-serif">Min Z: 3, ohms</text></svg>
<div class="btn" style="left:648px;top:412px;width:38px;height:16px;line-height:15px;font-size:10px;box-shadow:inset 0 0 0 1px #000,inset 2px 2px 0 #fff,inset -2px -2px 0 #808080">Clear</div>
<div class="btn" style="left:689px;top:412px;width:42px;height:16px;line-height:15px;font-size:10px">Cursor</div>
<svg class="a" style="left:0;top:0" width="1280" height="1024" viewBox="0 0 1280 1024"><g shape-rendering="crispEdges"><rect x="170" y="674" width="462" height="182" fill="#c8c8c8"/><rect x="172" y="676" width="459" height="179" fill="#000"/><path d="M185.5 676 V855 M197.5 676 V855 M207.5 676 V855 M216.5 676 V855 M224.5 676 V855 M277.5 676 V855 M308.5 676 V855 M330.5 676 V855 M347.5 676 V855 M361.5 676 V855 M373.5 676 V855 M383.5 676 V855 M392.5 676 V855 M400.5 676 V855 M453.5 676 V855 M484.5 676 V855 M507.5 676 V855 M524.5 676 V855 M538.5 676 V855 M549.5 676 V855 M560.5 676 V855 M569.5 676 V855 M577.5 676 V855 M172 685.5 H631 M172 695.5 H631 M172 705.5 H631 M172 715.5 H631 M172 725.5 H631 M172 735.5 H631 M172 745.5 H631 M172 755.5 H631 M172 765.5 H631 M172 775.5 H631 M172 785.5 H631 M172 795.5 H631 M172 805.5 H631 M172 815.5 H631 M172 825.5 H631 M172 835.5 H631 M172 845.5 H631 " stroke="#989898" stroke-width="1" fill="none"/></g><clipPath id="cp137_642"><rect x="170" y="675" width="462" height="181"/></clipPath><g clip-path="url(#cp137_642)"><path d="M170 725 H379" stroke="#ffee70" stroke-width="1.6"/><path d="M170 835.5 H299" stroke="#40e0e0" stroke-width="1" shape-rendering="crispEdges"/><polygon points="298.0,834.0 308.1,818.8 319.0,801.6 330.0,784.4 342.5,767.2 353.4,753.1 364.4,739.0 373.8,728.9 378.0,724.5 632.0,724.5 632.0,814.5 387.8,814.5 358.5,825.0 321.4,834.0" fill="#ffff00"/><polygon points="358.5,825.0 387.8,814.5 632.0,814.5 632.0,855.0 374.0,855.0" fill="#fff"/><polygon points="282.5,857.0 298.0,833.6 321.4,833.6 358.5,825.0 374.5,857.0" fill="#ff8040"/><polyline points="321.4,834.0 358.5,825.0 387.8,814.5 631.5,814.5 631.5,854.5 374.0,854.5" fill="none" stroke="#40e8e8" stroke-width="1"/><polyline points="431.0,674.7 420.0,683.8 408.8,693.1 393.1,707.5 376.9,724.4" fill="none" stroke="#ffff90" stroke-width="1.5"/><polyline points="253.8,856.0 265.0,835.0 280.0,807.8 287.8,793.8 295.6,776.6 303.4,759.4 308.1,746.9 312.8,731.2 316.7,715.6 320.0,704.5 322.2,700.6 324.5,702.5 326.9,706.2 331.6,713.3 339.4,717.2 348.8,718.0 358.1,716.4 370.0,711.2 384.4,703.8 401.2,693.1 415.6,683.1 428.5,675.0" fill="none" stroke="#cc2020" stroke-width="2" stroke-linejoin="round"/></g><path d="M171.5 856 V860 M185.5 856 V860 M197.5 856 V860 M207.5 856 V860 M216.5 856 V860 M224.5 856 V860 M277.5 856 V860 M308.5 856 V860 M330.5 856 V860 M347.5 856 V860 M361.5 856 V860 M373.5 856 V860 M383.5 856 V860 M392.5 856 V860 M400.5 856 V860 M453.5 856 V860 M484.5 856 V860 M507.5 856 V860 M524.5 856 V860 M538.5 856 V860 M549.5 856 V860 M560.5 856 V860 M569.5 856 V860 M577.5 856 V860 M630.5 856 V860 M167 685.5 H170 M632 685.5 H635 M167 705.5 H170 M632 705.5 H635 M167 725.5 H170 M632 725.5 H635 M167 745.5 H170 M632 745.5 H635 M167 765.5 H170 M632 765.5 H635 M167 785.5 H170 M632 785.5 H635 M167 805.5 H170 M632 805.5 H635 M167 825.5 H170 M632 825.5 H635 M167 845.5 H170 M632 845.5 H635 " stroke="#fff" stroke-width="1" fill="none" shape-rendering="crispEdges"/><text x="165" y="689.5" text-anchor="end" fill="#fff" font-size="12" font-family="Liberation Sans, sans-serif">dB</text><text x="165" y="709.5" text-anchor="end" fill="#fff" font-size="12" font-family="Liberation Sans, sans-serif">126</text><text x="165" y="729.5" text-anchor="end" fill="#fff" font-size="12" font-family="Liberation Sans, sans-serif" font-weight="bold">120</text><text x="165" y="749.5" text-anchor="end" fill="#fff" font-size="12" font-family="Liberation Sans, sans-serif">114</text><text x="165" y="769.5" text-anchor="end" fill="#fff" font-size="12" font-family="Liberation Sans, sans-serif">108</text><text x="165" y="789.5" text-anchor="end" fill="#fff" font-size="12" font-family="Liberation Sans, sans-serif">102</text><text x="165" y="809.5" text-anchor="end" fill="#fff" font-size="12" font-family="Liberation Sans, sans-serif">96</text><text x="165" y="829.5" text-anchor="end" fill="#fff" font-size="12" font-family="Liberation Sans, sans-serif">90</text><text x="165" y="849.5" text-anchor="end" fill="#fff" font-size="12" font-family="Liberation Sans, sans-serif">84</text><text x="169" y="873" fill="#fff" font-size="12" font-family="Liberation Sans, sans-serif">5 Hz</text><text x="224.6" y="873" text-anchor="middle" fill="#fff" font-size="12" font-family="Liberation Sans, sans-serif">10</text><text x="347.8" y="873" text-anchor="middle" fill="#fff" font-size="12" font-family="Liberation Sans, sans-serif">50</text><text x="400.9" y="873" text-anchor="middle" fill="#fff" font-size="12" font-family="Liberation Sans, sans-serif">100</text><text x="524.1" y="873" text-anchor="middle" fill="#fff" font-size="12" font-family="Liberation Sans, sans-serif">500</text><text x="577.2" y="873" text-anchor="middle" fill="#fff" font-size="12" font-family="Liberation Sans, sans-serif">1000</text><text x="634" y="873" text-anchor="end" fill="#fff" font-size="12" font-family="Liberation Sans, sans-serif">2000</text><text x="390" y="665" text-anchor="middle" fill="#000" font-size="12" font-weight="bold" font-family="Liberation Sans, sans-serif">Maximum Acoustic Power (dBPWL/Hz)</text><text x="389" y="664" text-anchor="middle" fill="#fff" font-size="12" font-weight="bold" font-family="Liberation Sans, sans-serif">Maximum Acoustic Power (dBPWL/Hz)</text><text x="631" y="663" text-anchor="end" fill="#ffff00" font-size="11" font-family="Liberation Sans, sans-serif" textLength="118" lengthAdjust="spacingAndGlyphs">Therm. Limit: 120 dBPWL</text></svg>
<div class="btn" style="left:144px;top:650px;width:38px;height:16px;line-height:15px;font-size:10px;box-shadow:inset 0 0 0 1px #000,inset 2px 2px 0 #fff,inset -2px -2px 0 #808080">Clear</div>
<div class="btn" style="left:185px;top:650px;width:42px;height:16px;line-height:15px;font-size:10px">Cursor</div>
<svg class="a" style="left:0;top:0" width="1280" height="1024" viewBox="0 0 1280 1024"><g shape-rendering="crispEdges"><rect x="674" y="674" width="462" height="182" fill="#c8c8c8"/><rect x="676" y="676" width="459" height="179" fill="#000"/><path d="M689.5 676 V855 M701.5 676 V855 M711.5 676 V855 M720.5 676 V855 M728.5 676 V855 M781.5 676 V855 M812.5 676 V855 M834.5 676 V855 M851.5 676 V855 M865.5 676 V855 M877.5 676 V855 M887.5 676 V855 M896.5 676 V855 M904.5 676 V855 M957.5 676 V855 M988.5 676 V855 M1011.5 676 V855 M1028.5 676 V855 M1042.5 676 V855 M1053.5 676 V855 M1064.5 676 V855 M1073.5 676 V855 M1081.5 676 V855 M676 685.5 H1135 M676 695.5 H1135 M676 705.5 H1135 M676 715.5 H1135 M676 725.5 H1135 M676 735.5 H1135 M676 745.5 H1135 M676 755.5 H1135 M676 765.5 H1135 M676 775.5 H1135 M676 785.5 H1135 M676 795.5 H1135 M676 805.5 H1135 M676 815.5 H1135 M676 825.5 H1135 M676 835.5 H1135 M676 845.5 H1135 " stroke="#989898" stroke-width="1" fill="none"/></g><clipPath id="cp641_642"><rect x="674" y="675" width="462" height="181"/></clipPath><g clip-path="url(#cp641_642)"><polyline points="675.8,695.5 680.0,693.8 707.5,697.0 727.5,700.0 745.0,705.0 765.0,710.8 781.2,716.2 800.0,723.8 815.0,730.0 825.0,736.2 833.8,746.2 842.5,758.8 852.5,776.2 862.5,795.0 875.0,812.5 890.0,827.0" fill="none" stroke="#cc2020" stroke-width="2" stroke-linejoin="round"/><polygon points="676.0,822.5 727.5,822.5 781.2,820.0 815.0,818.0 840.0,816.2 852.5,816.0 867.5,817.5 877.5,822.0 890.0,827.0 905.0,833.8 920.0,840.0 935.0,844.5 957.0,848.8 997.0,852.8 1037.6,854.4 1136.0,855.4 1136.0,857.0 676.0,857.0" fill="#ffff00"/></g><path d="M675.5 856 V860 M689.5 856 V860 M701.5 856 V860 M711.5 856 V860 M720.5 856 V860 M728.5 856 V860 M781.5 856 V860 M812.5 856 V860 M834.5 856 V860 M851.5 856 V860 M865.5 856 V860 M877.5 856 V860 M887.5 856 V860 M896.5 856 V860 M904.5 856 V860 M957.5 856 V860 M988.5 856 V860 M1011.5 856 V860 M1028.5 856 V860 M1042.5 856 V860 M1053.5 856 V860 M1064.5 856 V860 M1073.5 856 V860 M1081.5 856 V860 M1134.5 856 V860 M671 675.5 H674 M1136 675.5 H1139 M671 695.5 H674 M1136 695.5 H1139 M671 715.5 H674 M1136 715.5 H1139 M671 735.5 H674 M1136 735.5 H1139 M671 755.5 H674 M1136 755.5 H1139 M671 775.5 H674 M1136 775.5 H1139 M671 795.5 H674 M1136 795.5 H1139 M671 815.5 H674 M1136 815.5 H1139 M671 835.5 H674 M1136 835.5 H1139 M671 855.5 H674 M1136 855.5 H1139 " stroke="#fff" stroke-width="1" fill="none" shape-rendering="crispEdges"/><text x="669" y="679.5" text-anchor="end" fill="#fff" font-size="12" font-family="Liberation Sans, sans-serif">ms</text><text x="669" y="699.5" text-anchor="end" fill="#fff" font-size="12" font-family="Liberation Sans, sans-serif">16</text><text x="669" y="719.5" text-anchor="end" fill="#fff" font-size="12" font-family="Liberation Sans, sans-serif">14</text><text x="669" y="739.5" text-anchor="end" fill="#fff" font-size="12" font-family="Liberation Sans, sans-serif">12</text><text x="669" y="759.5" text-anchor="end" fill="#fff" font-size="12" font-family="Liberation Sans, sans-serif">10</text><text x="669" y="779.5" text-anchor="end" fill="#fff" font-size="12" font-family="Liberation Sans, sans-serif">8</text><text x="669" y="799.5" text-anchor="end" fill="#fff" font-size="12" font-family="Liberation Sans, sans-serif">6</text><text x="669" y="819.5" text-anchor="end" fill="#fff" font-size="12" font-family="Liberation Sans, sans-serif">4</text><text x="669" y="839.5" text-anchor="end" fill="#fff" font-size="12" font-family="Liberation Sans, sans-serif">2</text><text x="669" y="859.5" text-anchor="end" fill="#fff" font-size="12" font-family="Liberation Sans, sans-serif">0</text><text x="673" y="873" fill="#fff" font-size="12" font-family="Liberation Sans, sans-serif">5 Hz</text><text x="728.6" y="873" text-anchor="middle" fill="#fff" font-size="12" font-family="Liberation Sans, sans-serif">10</text><text x="851.8" y="873" text-anchor="middle" fill="#fff" font-size="12" font-family="Liberation Sans, sans-serif">50</text><text x="904.9" y="873" text-anchor="middle" fill="#fff" font-size="12" font-family="Liberation Sans, sans-serif">100</text><text x="1028.1" y="873" text-anchor="middle" fill="#fff" font-size="12" font-family="Liberation Sans, sans-serif">500</text><text x="1081.2" y="873" text-anchor="middle" fill="#fff" font-size="12" font-family="Liberation Sans, sans-serif">1000</text><text x="1138" y="873" text-anchor="end" fill="#fff" font-size="12" font-family="Liberation Sans, sans-serif">2000</text><text x="892" y="665" text-anchor="middle" fill="#000" font-size="12" font-weight="bold" font-family="Liberation Sans, sans-serif" textLength="168" lengthAdjust="spacingAndGlyphs">Group Delay (Milliseconds/Hz)</text><text x="891" y="664" text-anchor="middle" fill="#fff" font-size="12" font-weight="bold" font-family="Liberation Sans, sans-serif" textLength="168" lengthAdjust="spacingAndGlyphs">Group Delay (Milliseconds/Hz)</text></svg>
<div class="btn" style="left:648px;top:650px;width:38px;height:16px;line-height:15px;font-size:10px;box-shadow:inset 0 0 0 1px #000,inset 2px 2px 0 #fff,inset -2px -2px 0 #808080">Clear</div>
<div class="btn" style="left:689px;top:650px;width:42px;height:16px;line-height:15px;font-size:10px">Cursor</div>
<svg class="a" style="left:592px;top:414px" width="26" height="16" viewBox="592 414 26 16"><path d="M594 425 V421.500 L599.500 420.500 L602.500 417 H609 L611 420 L614.500 421 V425 Z" fill="#f4f4f4"/><path d="M603.300 418 H605.500 V420.500 H601.300 Z M606.500 418 H608.500 L609.800 420.500 H606.500 Z" fill="#b8b8b8"/><path d="M594 425.200 H615 V421.500" stroke="#000" stroke-width="1" fill="none"/><rect x="597" y="424" width="3" height="3" fill="#000"/><rect x="609" y="424" width="3" height="3" fill="#000"/><path d="M609.500 417.500 L611 419.500" stroke="#000" stroke-width="1"/></svg>
<div class="a" style="left:618px;top:415px;width:13px;height:13px;background:#fff;box-shadow:inset 1px 1px 0 #808080,inset -1px -1px 0 #fff,inset 2px 2px 0 #606060"><svg width="13" height="13"><path d="M3.500 6 L5.500 8.500 L10 4" stroke="#000" stroke-width="2" fill="none"/></svg></div>
<svg class="a" style="left:0;top:988px" width="1280" height="36" viewBox="0 988 1280 36"><defs><linearGradient id="tbg" x1="0" y1="0" x2="0" y2="1"><stop offset="0" stop-color="#2a62d6"/><stop offset="0.06" stop-color="#3a82f0"/><stop offset="0.14" stop-color="#2c6ee6"/><stop offset="0.3" stop-color="#2763e0"/><stop offset="0.8" stop-color="#255edb"/><stop offset="1" stop-color="#1c48b0"/></linearGradient><linearGradient id="trg" x1="0" y1="0" x2="0" y2="1"><stop offset="0" stop-color="#1680d8"/><stop offset="0.08" stop-color="#2aa8f8"/><stop offset="0.2" stop-color="#1694ec"/><stop offset="0.8" stop-color="#1290e8"/><stop offset="1" stop-color="#0e70c0"/></linearGradient><linearGradient id="stg" x1="0" y1="0" x2="0" y2="1"><stop offset="0" stop-color="#2e8a2e"/><stop offset="0.1" stop-color="#6cc06c"/><stop offset="0.25" stop-color="#3faa3f"/><stop offset="0.75" stop-color="#36a036"/><stop offset="1" stop-color="#2a7a2a"/></linearGradient><linearGradient id="bt" x1="0" y1="0" x2="0" y2="1"><stop offset="0" stop-color="#5a9af8"/><stop offset="0.15" stop-color="#3c82f2"/><stop offset="0.85" stop-color="#387cee"/><stop offset="1" stop-color="#2e68d8"/></linearGradient><linearGradient id="bta" x1="0" y1="0" x2="0" y2="1"><stop offset="0" stop-color="#1a48b0"/><stop offset="0.2" stop-color="#1e52c4"/><stop offset="1" stop-color="#2058cc"/></linearGradient></defs><rect x="0" y="990" width="1280" height="34" fill="url(#tbg)"/><rect x="1151" y="990" width="129" height="34" fill="url(#trg)"/><rect x="1150" y="991" width="1" height="33" fill="#0c3c90"/><rect x="1151" y="992" width="1" height="32" fill="#48b0f8" opacity="0.6"/><path d="M0 994 H82 Q95 996 94 1009 Q95 1022 86 1024 H0 Z" fill="url(#stg)"/><path d="M0 994.5 H82 Q94 996 93.500 1009" fill="none" stroke="#8ad88a" stroke-width="1" opacity="0.7"/><g transform="translate(11,1000)"><path d="M2 1 Q5 -0.5 8 1 L7 7 Q4 5.500 1 7 Z" fill="#e8542a"/><path d="M9.500 1.500 Q12.500 3 15.500 1.500 L14.500 7.500 Q11.500 9 8.500 7.500 Z" fill="#7ec242"/><path d="M0.800 8.500 Q3.800 7 6.800 8.500 L5.800 14.500 Q2.800 13 -0.200 14.500 Z" fill="#4a7ee0"/><path d="M8.300 9 Q11.300 10.500 14.300 9 L13.300 15 Q10.300 16.500 7.300 15 Z" fill="#f8c830"/></g><text x="37" y="1015.500" fill="#1a4a1a" font-size="17" font-weight="bold" font-style="italic" font-family="Liberation Sans, sans-serif" textLength="35" lengthAdjust="spacingAndGlyphs">пуск</text><text x="36" y="1014.500" fill="#fff" font-size="17" font-weight="bold" font-style="italic" font-family="Liberation Sans, sans-serif" textLength="35" lengthAdjust="spacingAndGlyphs">пуск</text><rect x="104" y="998" width="2" height="2" fill="#12349a"/><rect x="105" y="999" width="2" height="2" fill="#6a9cf4" opacity="0.6"/><rect x="104" y="998" width="2" height="2" fill="#12349a"/><rect x="107" y="1002" width="2" height="2" fill="#12349a"/><rect x="108" y="1003" width="2" height="2" fill="#6a9cf4" opacity="0.6"/><rect x="107" y="1002" width="2" height="2" fill="#12349a"/><rect x="104" y="1006" width="2" height="2" fill="#12349a"/><rect x="105" y="1007" width="2" height="2" fill="#6a9cf4" opacity="0.6"/><rect x="104" y="1006" width="2" height="2" fill="#12349a"/><rect x="107" y="1010" width="2" height="2" fill="#12349a"/><rect x="108" y="1011" width="2" height="2" fill="#6a9cf4" opacity="0.6"/><rect x="107" y="1010" width="2" height="2" fill="#12349a"/><rect x="104" y="1014" width="2" height="2" fill="#12349a"/><rect x="105" y="1015" width="2" height="2" fill="#6a9cf4" opacity="0.6"/><rect x="104" y="1014" width="2" height="2" fill="#12349a"/><rect x="107" y="1018" width="2" height="2" fill="#12349a"/><rect x="108" y="1019" width="2" height="2" fill="#6a9cf4" opacity="0.6"/><rect x="107" y="1018" width="2" height="2" fill="#12349a"/><rect x="1101" y="998" width="2" height="2" fill="#12349a"/><rect x="1102" y="999" width="2" height="2" fill="#6a9cf4" opacity="0.6"/><rect x="1101" y="998" width="2" height="2" fill="#12349a"/><rect x="1104" y="1002" width="2" height="2" fill="#12349a"/><rect x="1105" y="1003" width="2" height="2" fill="#6a9cf4" opacity="0.6"/><rect x="1104" y="1002" width="2" height="2" fill="#12349a"/><rect x="1101" y="1006" width="2" height="2" fill="#12349a"/><rect x="1102" y="1007" width="2" height="2" fill="#6a9cf4" opacity="0.6"/><rect x="1101" y="1006" width="2" height="2" fill="#12349a"/><rect x="1104" y="1010" width="2" height="2" fill="#12349a"/><rect x="1105" y="1011" width="2" height="2" fill="#6a9cf4" opacity="0.6"/><rect x="1104" y="1010" width="2" height="2" fill="#12349a"/><rect x="1101" y="1014" width="2" height="2" fill="#12349a"/><rect x="1102" y="1015" width="2" height="2" fill="#6a9cf4" opacity="0.6"/><rect x="1101" y="1014" width="2" height="2" fill="#12349a"/><rect x="1104" y="1018" width="2" height="2" fill="#12349a"/><rect x="1105" y="1019" width="2" height="2" fill="#6a9cf4" opacity="0.6"/><rect x="1104" y="1018" width="2" height="2" fill="#12349a"/><rect x="116" y="998" width="158" height="24" rx="3" fill="url(#bt)"/><text x="145" y="1014" fill="#fff" font-size="11" font-family="Liberation Sans, sans-serif" textLength="111" lengthAdjust="spacingAndGlyphs">183696115: Forex4y...</text><rect x="276" y="998" width="158" height="24" rx="3" fill="url(#bt)"/><text x="304" y="1014" fill="#fff" font-size="11" font-family="Liberation Sans, sans-serif" textLength="112" lengthAdjust="spacingAndGlyphs">http://www.audiotec...</text><rect x="436" y="998" width="158" height="24" rx="3" fill="url(#bta)"/><rect x="436.5" y="998.500" width="157" height="23" rx="3" fill="none" stroke="#153c94" stroke-width="1"/><text x="466" y="1014" fill="#fff" font-size="11" font-family="Liberation Sans, sans-serif" textLength="112.5" lengthAdjust="spacingAndGlyphs">SpeakerShop Enclosu...</text><rect x="596" y="998" width="158" height="24" rx="3" fill="url(#bt)"/><text x="625" y="1014" fill="#fff" font-size="11" font-family="Liberation Sans, sans-serif" textLength="45" lengthAdjust="spacingAndGlyphs">20 - Paint</text><rect x="125" y="1001" width="16" height="17" fill="#f4f8f0"/><path d="M136 1003 L129 1010 V1012 H134 V1016 H137 V1003 Z" fill="#58a828"/><ellipse cx="292.500" cy="1009.500" rx="6.500" ry="7.500" fill="#e01818"/><ellipse cx="292.500" cy="1009.500" rx="2.600" ry="5.200" fill="#fff"/><path d="M453 1001 L460 1004 L461 1011 L456 1016 H450 L446 1011 L447 1004 Z" fill="#181840"/><path d="M450 1005 L455 1003 L453 1009 L457 1007 L452 1012 Z" fill="#e83880"/><rect x="448" y="1013" width="10" height="5" fill="#101030"/><text x="448.500" y="1018" fill="#fff" font-size="5" font-weight="bold" font-family="Liberation Sans, sans-serif">XX</text><path d="M607 1006 L610 1016 H617 L620 1006 Z" fill="#e8d8a0" stroke="#a08030" stroke-width="0.800"/><path d="M609 1006 L608 1001 M612 1006 V1000 M615 1006 L616 1001 M618 1006 L619 1002" stroke="#c03020" stroke-width="1.600"/><path d="M612 1006 V1000" stroke="#e8c020" stroke-width="1.600"/><text x="1114" y="1014" fill="#fff" font-size="11" font-family="Liberation Sans, sans-serif">EN</text><rect x="1137" y="1003" width="1" height="12" fill="#1a3c98"/><circle cx="1151" cy="1009.500" r="8.500" fill="#2a80e8" stroke="#9cd0ff" stroke-width="1"/><path d="M1153.500 1005.500 L1149 1009.500 L1153.500 1013.500" stroke="#fff" stroke-width="2" fill="none"/><rect x="1163" y="1004" width="14" height="10" fill="#fff" stroke="#c02020" stroke-width="1"/><rect x="1166" y="1002" width="8" height="2" fill="#40c040"/><rect x="1166" y="1014" width="8" height="3" fill="#40c040"/><text x="1164.500" y="1012.500" fill="#000" font-size="8" font-weight="bold" font-family="Liberation Sans, sans-serif">NA</text><rect x="1186" y="1001" width="9" height="8" fill="#78b0e8" stroke="#d0e8ff" stroke-width="1"/><rect x="1181" y="1006" width="9" height="8" fill="#a8d0f8" stroke="#e8f4ff" stroke-width="1"/><rect x="1183" y="1015" width="6" height="2" fill="#d0d8e0"/><circle cx="1204" cy="1007" r="5.500" fill="#707880" stroke="#b0b8c0" stroke-width="1"/><circle cx="1203" cy="1006" r="2.200" fill="#202830"/><path d="M1207 1012 L1212 1015" stroke="#b0c0d0" stroke-width="2.500"/><circle cx="1224" cy="1009" r="8" fill="#f07810"/><circle cx="1221.500" cy="1006" r="3" fill="#f8a850"/><ellipse cx="1229" cy="1009" rx="2.200" ry="4" fill="#fff"/><circle cx="1229.500" cy="1009" r="1.500" fill="#803000"/><text x="1239.500" y="1014" fill="#fff" font-size="11" font-family="Liberation Sans, sans-serif" textLength="27" lengthAdjust="spacingAndGlyphs">17:45</text></svg>
<div class="a" style="left:1228px;top:2px;width:15px;height:20px;background:#ece9d8;box-shadow:inset 1px 1px 0 #fff,inset -1px -1px 0 #5a6a7a,inset -2px -2px 0 #aca899"><svg width="15" height="20" viewBox="0 2 15 20" shape-rendering="crispEdges"><rect x="4" y="14" width="6" height="2" fill="#000"/></svg></div>
<div class="a" style="left:1243px;top:2px;width:16px;height:20px;background:#ece9d8;box-shadow:inset 1px 1px 0 #fff,inset -1px -1px 0 #5a6a7a,inset -2px -2px 0 #aca899"><svg width="16" height="20" viewBox="0 2 16 20" shape-rendering="crispEdges"><path d="M6.500 8 H12.500 V13.500 H11 M6.500 9 H12.500" stroke="#000" stroke-width="1" fill="none"/><rect x="6" y="7" width="7" height="2" fill="#000"/><rect x="4.500" y="11.500" width="6" height="4" fill="none" stroke="#000" stroke-width="1"/><rect x="4" y="10" width="7" height="2" fill="#000"/></svg></div>
<div class="a" style="left:1262px;top:2px;width:15px;height:20px;background:#ece9d8;box-shadow:inset 1px 1px 0 #fff,inset -1px -1px 0 #5a6a7a,inset -2px -2px 0 #aca899"><svg width="15" height="20" viewBox="0 2 15 20" shape-rendering="crispEdges"><path d="M4 8 L10.500 15 M10.500 8 L4 15" stroke="#000" stroke-width="2" fill="none" shape-rendering="geometricPrecision"/></svg></div>
<svg class="a" style="left:4px;top:3px" width="18" height="18"><path d="M8 1 L15 4 L16 10 L12 14 H5 L1 10 L2 4 Z" fill="#14143c"/><path d="M4 5 L9 3 L8 8 L12 6 L6 11 Z" fill="#e83880"/><path d="M11 4 L12 8" stroke="#f8e040" stroke-width="1.500"/><rect x="3" y="12" width="11" height="5" fill="#0c0c30"/><text x="4" y="16.500" fill="#fff" font-size="5.500" font-weight="bold" font-family="Liberation Sans, sans-serif">XX</text></svg>
</div></body></html>
